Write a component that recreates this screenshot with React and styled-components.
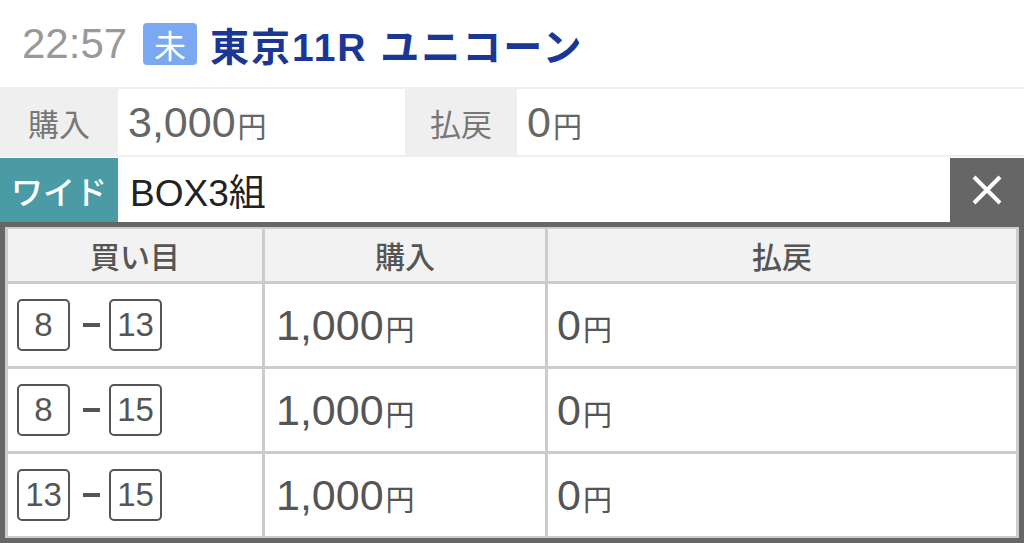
import React from 'react';
import styled, { createGlobalStyle } from 'styled-components';

const GlobalStyle = createGlobalStyle`
  body {
    margin: 0;
    background: #ffffff;
    font-family: "Liberation Sans", "Noto Sans CJK JP", sans-serif;
    -webkit-font-smoothing: antialiased;
  }
`;

const Wrapper = styled.div`
  width: 1024px;
  height: 543px;
  overflow: hidden;
  background: #ffffff;
`;

const Header = styled.div`
  height: 87px;
  display: flex;
  align-items: center;
  padding-left: 22px;
  box-sizing: border-box;
`;

const Time = styled.span`
  font-size: 42px;
  color: #999999;
`;

const Badge = styled.span`
  display: flex;
  align-items: center;
  justify-content: center;
  width: 54px;
  height: 42px;
  margin: 0 13px 0 16px;
  border-radius: 4px;
  background: #7ba9f1;
  color: #ffffff;
  font-size: 32px;
  font-family: "Noto Sans CJK JP", sans-serif;
`;

const RaceTitle = styled.span`
  font-size: 39px;
  font-weight: 700;
  color: #1a3795;
  font-family: "Liberation Sans", "Noto Sans CJK JP", sans-serif;
  letter-spacing: 2px;
`;

const SummaryRow = styled.div`
  height: 70px;
  display: grid;
  grid-template-columns: 118px 287px 112px 1fr;
  background: #efefef;
  padding: 2px 0;
  box-sizing: border-box;
`;

const SummaryLabel = styled.div`
  display: flex;
  align-items: center;
  justify-content: center;
  font-size: 31px;
  color: #777777;
  font-family: "Noto Sans CJK JP", sans-serif;
`;

const SummaryValue = styled.div`
  display: flex;
  align-items: center;
  padding-left: 10px;
  background: #ffffff;
  font-size: 43px;
  color: #666666;
`;

const Yen = styled.span`
  font-size: 29px;
  font-family: "Noto Sans CJK JP", sans-serif;
  margin-left: 2px;
  position: relative;
  top: 3px;
`;

const TypeRow = styled.div`
  height: 64px;
  margin-top: 1px;
  display: flex;
`;

const TypeLabel = styled.div`
  width: 118px;
  display: flex;
  align-items: center;
  justify-content: center;
  background: #4b9ba5;
  color: #ffffff;
  font-size: 32px;
  font-weight: 500;
  font-family: "Noto Sans CJK JP", sans-serif;
`;

const TypeValue = styled.div`
  flex: 1;
  display: flex;
  align-items: center;
  padding-left: 12px;
  font-size: 37px;
  color: #222222;
`;

const CloseButton = styled.div`
  width: 74px;
  display: flex;
  align-items: center;
  justify-content: center;
  background: #666666;
`;

const Table = styled.div`
  display: grid;
  grid-template-columns: 254px 280px 1fr;
  grid-template-rows: 52px repeat(3, 82px);
  gap: 3px;
  padding: 2px 3px;
  border: 5px solid #666666;
  background: #cccccc;
`;

const HeadCell = styled.div`
  display: flex;
  align-items: center;
  justify-content: center;
  background: #f2f2f2;
  color: #555555;
  font-size: 30px;
  font-weight: 500;
  font-family: "Noto Sans CJK JP", sans-serif;
`;

const Cell = styled.div`
  display: flex;
  align-items: center;
  background: #ffffff;
  padding-left: ${props => props.pad || 9}px;
  color: #555555;
  font-size: 43px;
`;

const NumBox = styled.span`
  width: 53px;
  height: 52px;
  box-sizing: border-box;
  border: 2px solid #555555;
  border-radius: 5px;
  display: flex;
  align-items: center;
  justify-content: center;
  font-size: 33px;
  color: #555555;
`;

const Dash = styled.span`
  width: 17px;
  height: 4px;
  margin: 0 9px 0 13px;
  background: #555555;
`;

const rows = [
  ['8', '13'],
  ['8', '15'],
  ['13', '15'],
];

export default function App() {
  return (
    <Wrapper>
      <GlobalStyle />
      <Header>
        <Time>22:57</Time>
        <Badge>未</Badge>
        <RaceTitle>東京11R ユニコーン</RaceTitle>
      </Header>

      <SummaryRow>
        <SummaryLabel>購入</SummaryLabel>
        <SummaryValue>3,000<Yen>円</Yen></SummaryValue>
        <SummaryLabel>払戻</SummaryLabel>
        <SummaryValue>0<Yen>円</Yen></SummaryValue>
      </SummaryRow>

      <TypeRow>
        <TypeLabel>ワイド</TypeLabel>
        <TypeValue>BOX3組</TypeValue>
        <CloseButton>
          <svg width="32" height="32" viewBox="0 0 32 32">
            <path d="M3 3 L29 29 M29 3 L3 29" stroke="#ffffff" strokeWidth="4" />
          </svg>
        </CloseButton>
      </TypeRow>

      <Table>
        <HeadCell>買い目</HeadCell>
        <HeadCell>購入</HeadCell>
        <HeadCell>払戻</HeadCell>
        {rows.map(([a, b], i) => (
          <React.Fragment key={i}>
            <Cell>
              <NumBox>{a}</NumBox>
              <Dash />
              <NumBox>{b}</NumBox>
            </Cell>
            <Cell pad={11}>1,000<Yen>円</Yen></Cell>
            <Cell>0<Yen>円</Yen></Cell>
          </React.Fragment>
        ))}
      </Table>
    </Wrapper>
  );
}
